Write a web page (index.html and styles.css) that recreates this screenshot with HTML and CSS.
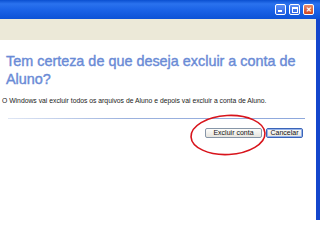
FILE: index.html
```html
<!DOCTYPE html>
<html lang="pt">
<head>
    <meta charset="UTF-8">
    <title>Contas de usuário</title>
    <link rel="stylesheet" href="styles.css">
</head>
<body>

    <!-- janela -->
    <div class="window">
        <div class="titlebar">
            <span class="win-btn min-btn"><i></i></span>
            <span class="win-btn max-btn"><i></i></span>
            <span class="win-btn close-btn">&#x2715;</span>
        </div>

        <div class="frame">
            <div class="toolbar"></div>

            <div class="content">
                <h1 class="question">Tem certeza de que deseja excluir a conta de Aluno?</h1>
                <p class="info">O Windows vai excluir todos os arquivos de Aluno e depois vai excluir a conta de Aluno.</p>
                <div class="separator"></div>

                <div class="actions">
                    <button class="btn">Excluir conta</button>
                    <button class="btn btn-default">Cancelar</button>
                    <!-- marca vermelha -->
                    <svg class="mark" width="80" height="44" viewBox="0 0 80 44">
                        <ellipse cx="40" cy="22" rx="37" ry="19.5" fill="none" stroke="#d8141c" stroke-width="1.6" transform="rotate(-3 40 22)"/>
                    </svg>
                </div>
            </div>
        </div>
    </div>

</body>
</html>
```

FILE: styles.css
```css
body {
    margin: 0;
    padding: 0;
    width: 320px;
    height: 240px;
    background-color: #fff;
    font-family: "Liberation Sans", Arial, sans-serif;
    overflow: hidden;
}

.window {
    display: flex;
    flex-direction: column;
    height: 220px;
}

/* barra de titulo azul */
.titlebar {
    height: 19px;
    display: flex;
    justify-content: flex-end;
    align-items: center;
    gap: 3px;
    padding-right: 6px;
    background: linear-gradient(#0a4fd0 0%, #2a72ee 20%, #1a62e6 55%, #0d52d6 100%);
}

.win-btn {
    width: 9px;
    height: 9px;
    border: 1px solid #fff;
    border-radius: 2px;
    background: linear-gradient(#5c8ff5, #2a63e4);
    display: flex;
    align-items: center;
    justify-content: center;
    position: relative;
}

.min-btn i {
    position: absolute;
    left: 2px;
    bottom: 2px;
    width: 4px;
    height: 2px;
    background: #fff;
}

.max-btn i {
    width: 4px;
    height: 3px;
    border: 1px solid #fff;
    border-top-width: 2px;
}

.close-btn {
    background: linear-gradient(#e88a6c, #d0461e);
    color: #fff;
    font-size: 7px;
    font-weight: bold;
    line-height: 1;
}

.frame {
    flex: 1;
    display: flex;
    flex-direction: column;
    border-right: 4px solid #1446cc;
}

.toolbar {
    height: 21px;
    background-color: #ece9d8;
}

.content {
    flex: 1;
    background-color: #fff;
}

.question {
    margin: 12px 0 0 6px;
    width: 306px;
    font-size: 14.4px;
    line-height: 18px;
    font-weight: normal;
    color: #6a8bd6;
    -webkit-text-stroke: 0.4px #6a8bd6;
}

.info {
    margin: 9px 0 0 2px;
    font-size: 6.8px;
    color: #222;
}

.separator {
    height: 1px;
    margin: 14px 11px 0 8px;
    background: linear-gradient(to right, #dfe6f4, #9cb2de 40%, #8ea8dc);
}

.actions {
    display: flex;
    justify-content: flex-end;
    gap: 4px;
    margin: 9px 13px 0 0;
    position: relative;
}

.btn {
    height: 10px;
    padding: 0;
    border: 1px solid #8796a8;
    border-radius: 2px;
    background: linear-gradient(#fdfdfb, #e6e4de);
    font-family: "Liberation Sans", Arial, sans-serif;
    font-size: 7px;
    line-height: 8px;
    color: #111;
    width: 57px;
}

.btn-default {
    width: 37px;
    border: 1px solid #3a64b8;
    box-shadow: inset 0 0 0 1px #98b4ea;
}

.mark {
    position: absolute;
    left: 188px;
    top: -15px;
}
```
